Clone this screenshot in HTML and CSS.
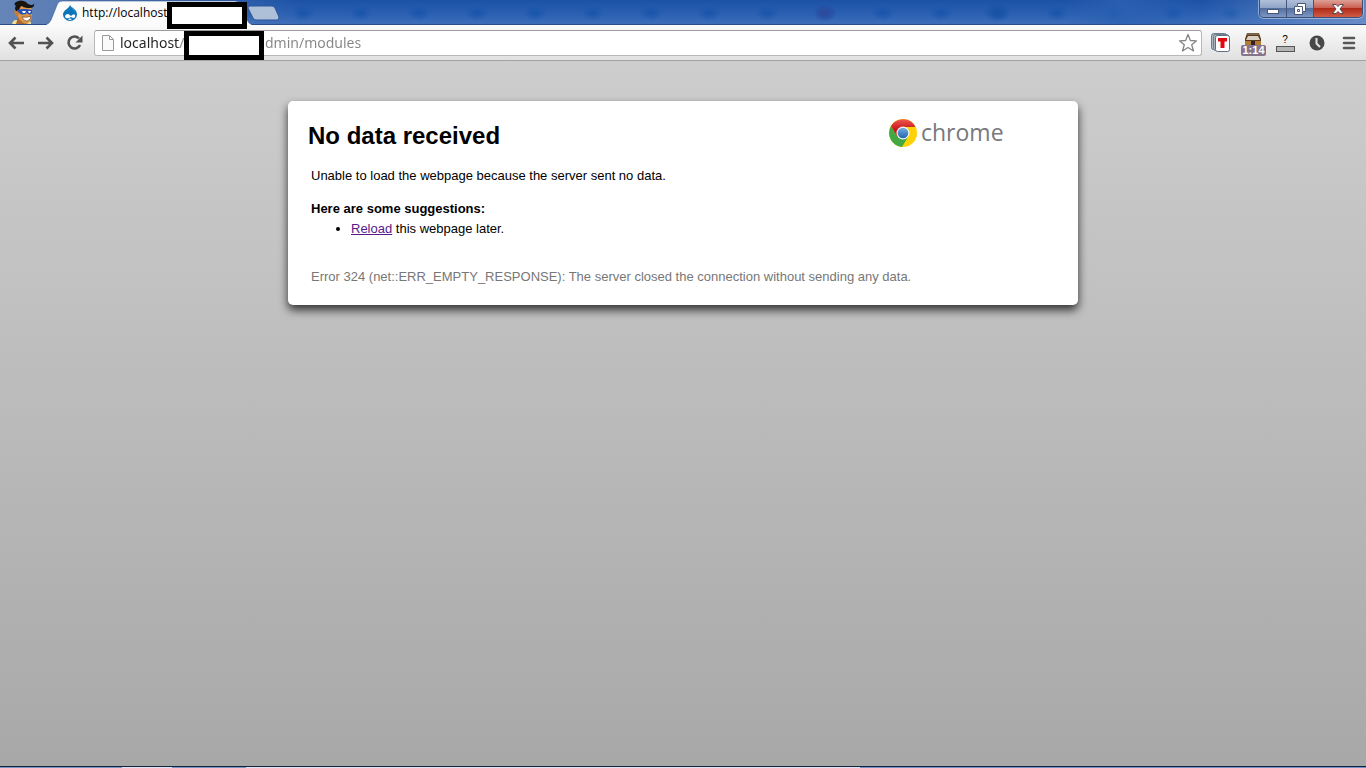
FILE: index.html
```html
<!DOCTYPE html>
<html lang="en">
<head>
    <meta charset="utf-8">
    <title>No data received</title>
    <link rel="stylesheet" href="styles.css">
</head>
<body>
<header class="titlebar">
    <svg class="avatar" width="24" height="24" viewBox="0 0 24 24">
        <path d="M0 24 Q1 20 4 20 L18 21 Q19 22 19 24 Z" fill="#f1df9a"/>
        <path d="M4 24 L6 17 L17 20 L15 24 Z" fill="#a9672f"/>
        <path d="M5 6 Q11 3 19 6 L20 15 Q20 21 15 24 Q9 23 6 17 Z" fill="#d99549"/>
        <path d="M4 10 Q1 10 3 15 L6 17 L7 10 Z" fill="#c47b35"/>
        <path d="M4 11 Q2 8 4 6 Q1 4 4 2 Q9 -1 14 2 Q16 5 19 5 Q22 5 22 3 Q23 8 18 8 Q12 8 10 6 Q8 6 7 11 Z" fill="#19140f"/>
        <path d="M5 10 Q12 8 20 10 L20 13 Q18 16 15 13 Q11 16 7 13 Z" fill="#2450b8"/>
        <path d="M10 11 L14 11 L13 13 L11 13 Z M16 11 L19 11 L18 13 L17 13 Z" fill="#fff"/>
        <path d="M10 17 Q15 18 19 16 Q18 21 14 21 Q11 20 10 17 Z" fill="#fff" stroke="#7a421c" stroke-width=".7"/>
    </svg>
    <button class="tab" type="button">
        <svg class="tab-shape" width="206" height="25" viewBox="0 0 206 25">
            <path d="M0 25 Q3 24 5 20 L11 5 Q12 1 16 1 L189 1 Q193 1 195 5 L201 20 Q203 24 206 25 Z" fill="#fbfbfb"/>
            <path d="M0 24.5 Q3 24 5 20 L11 5 Q12 1 16 1 L189 1 Q193 1 195 5 L201 20 Q203 24 206 24.5" fill="none" stroke="#35568f" stroke-opacity=".6"/>
        </svg>
        <svg class="favicon" width="16" height="16" viewBox="0 0 16 16">
            <path d="M8 0 C9 3 15 4 15 9.500 A7 6.500 0 0 1 1 9.500 C1 5 7 4 8 0 Z" fill="#0b76b8"/>
            <path d="M9 2 Q13 4 13 7 Q11 4 9 2 Z" fill="#3f9bd0"/>
            <path d="M3 12 Q3 9 6 9 Q8 10 9 11 Q12 8 13 10 Q14 13 11 13 L9 12 Q6 14 4 13 Z M6 14 Q8 13 10 14 Q8 16 6 14 Z" fill="#fff"/>
        </svg>
        <span class="tab-title">http://localhost/</span>
    </button>
    <button class="new-tab" type="button" aria-label="New tab">
        <svg width="34" height="16" viewBox="0 0 34 16">
            <path d="M3 1 L25 1 Q27 1 28 3 L32 12 Q32 15 30 15 L9 15 Q7 15 6 13 L1 3 Q1 1 3 1 Z" fill="#aebfd8" stroke="#2c559b"/>
        </svg>
    </button>
    <div class="window-buttons">
        <button class="win minimize" type="button" aria-label="Minimize">
            <svg width="14" height="14" viewBox="0 0 14 14"><rect x="1.500" y="7.500" width="11" height="4" fill="#fff" stroke="#4a5878"/></svg>
        </button>
        <button class="win restore" type="button" aria-label="Restore">
            <svg width="14" height="14" viewBox="0 0 14 14">
                <path d="M4.500 1.500 H12.500 V9.500 H9.500 V12.500 H1.500 V4.500 H4.500 Z" fill="#fff" stroke="#4a5878"/>
                <path d="M4.500 7.500 H6.500 V9.500 H4.500 Z M5 4.500 H9.500 V9" fill="none" stroke="#4a5878"/>
            </svg>
        </button>
        <button class="win close" type="button" aria-label="Close">
            <svg width="14" height="14" viewBox="0 0 14 14"><path d="M1.500 2.500 H5 L7 4.500 L9 2.500 H12.500 L9 7 L12.500 11.500 H9 L7 9.500 L5 11.500 H1.500 L5 7 Z" fill="#fff" stroke="#5b4550"/></svg>
        </button>
    </div>
    <span class="mask mask-tab"></span>
</header>

<nav class="toolbar">
    <button class="tool" type="button" aria-label="Back">
        <svg width="18" height="18" viewBox="0 0 18 18"><path d="M17 9 H4 M8.500 3.500 L3 9 L8.500 14.500" fill="none" stroke="#525252" stroke-width="2.600"/></svg>
    </button>
    <button class="tool" type="button" aria-label="Forward">
        <svg width="18" height="18" viewBox="0 0 18 18"><path d="M2 9 H15 M10.500 3.500 L16 9 L10.500 14.500" fill="none" stroke="#525252" stroke-width="2.600"/></svg>
    </button>
    <button class="tool" type="button" aria-label="Reload">
        <svg width="18" height="18" viewBox="0 0 18 18">
            <path d="M14 4.500 A6 6 0 1 0 15 11" fill="none" stroke="#525252" stroke-width="2.600"/>
            <path d="M17.500 1.500 V8.500 H10.500 Z" fill="#525252"/>
        </svg>
    </button>
    <div class="omnibox">
        <svg class="page-icon" width="14" height="18" viewBox="0 0 14 18"><path d="M1.500 1.500 H8.500 L12.500 5.500 V16.500 H1.500 Z M8.500 1.500 V5.500 H12.500" fill="#fafafa" stroke="#9a9a9a"/></svg>
        <input class="address" type="text" aria-label="Address" value="localhost/                    admin/modules">
        <button class="star" type="button" aria-label="Bookmark this page">
            <svg width="20" height="20" viewBox="0 0 20 20"><path d="M10 1.500 L12.400 7.500 L18.500 7.800 L13.700 11.800 L15.500 18 L10 14.500 L4.500 18 L6.300 11.800 L1.500 7.800 L7.600 7.500 Z" fill="#fff" stroke="#858585" stroke-width="1.300" stroke-linejoin="round"/></svg>
        </button>
    </div>
    <div class="extensions">
        <button class="ext" type="button" aria-label="T">
            <svg width="20" height="20" viewBox="0 0 20 20">
                <rect x=".5" y=".5" width="15" height="16" rx="2" fill="#a9b5bf" stroke="#6d7e8c"/>
                <rect x="2.500" y="1.500" width="15" height="16" rx="2" fill="#a9b5bf" stroke="#6d7e8c"/>
                <rect x="4.500" y="2.500" width="14" height="16" rx="2" fill="#fff" stroke="#5e7182"/>
                <path d="M7 5 H16 V8.500 H13.500 V15 H9.500 V8.500 H7 Z" fill="#e0090f"/>
            </svg>
        </button>
        <button class="ext timer" type="button">
            <svg width="20" height="20" viewBox="0 0 20 20">
                <path d="M4 0 H16 L18 6 V17 H2 V6 Z" fill="#5a3b20"/>
                <path d="M5 3 H15 L17 7 H3 Z" fill="#d8d0c4"/>
                <path d="M4 0 H16 V2 H4 Z" fill="#7c644c"/>
                <path d="M2 8 H18 V12 H2 Z" fill="#b07a33"/>
                <path d="M8 8 H12 V12 H8 Z" fill="#33251b"/>
            </svg>
            <span class="badge">1:14</span>
        </button>
        <button class="ext unknown" type="button">
            <span>?</span>
            <i class="slot"></i>
        </button>
        <button class="ext" type="button" aria-label="History">
            <svg width="16" height="16" viewBox="0 0 16 16"><circle cx="8" cy="8" r="7.500" fill="#484848"/><path d="M7.500 3 V8.500 L11 12" fill="none" stroke="#e5e5e5" stroke-width="2"/></svg>
        </button>
        <button class="ext" type="button" aria-label="Menu">
            <svg width="14" height="14" viewBox="0 0 14 14"><path d="M2 2 H12 M2 7 H12 M2 12 H12" stroke="#585858" stroke-width="2.600" stroke-linecap="round"/></svg>
        </button>
    </div>
    <span class="mask mask-address"></span>
</nav>

<main class="page">
    <section class="box">
        <div class="box-head">
            <h1>No data received</h1>
            <div class="logo">
                <svg width="28" height="28" viewBox="0 0 28 28">
                    <defs>
                        <linearGradient id="red" x2="0" y2="1"><stop offset="0" stop-color="#ee5a50"/><stop offset=".6" stop-color="#c9151b"/></linearGradient>
                        <linearGradient id="blue" x2="0" y2="1"><stop offset="0" stop-color="#75aee0"/><stop offset="1" stop-color="#1f64b0"/></linearGradient>
                    </defs>
                    <circle cx="14" cy="14" r="14" fill="#fdd308"/>
                    <path d="M14 14 L8 17 L2 7 A14 14 0 0 0 13 28 L19 18 Z" fill="#43a843"/>
                    <path d="M14 14 L8 17 L2 7 A14 14 0 0 1 26.500 8 L14 8 Z" fill="url(#red)"/>
                    <circle cx="14" cy="14" r="6.500" fill="#f4f6f8"/>
                    <circle cx="14" cy="14" r="5.300" fill="url(#blue)"/>
                </svg>
                <span>chrome</span>
            </div>
        </div>
        <div class="details">
            <p>Unable to load the webpage because the server sent no data.</p>
            <h2>Here are some suggestions:</h2>
            <ul>
                <li><a href="#">Reload</a> this webpage later.</li>
            </ul>
            <p class="error">Error 324 (net::ERR_EMPTY_RESPONSE): The server closed the connection without sending any data.</p>
        </div>
    </section>
</main>
<footer class="taskbar"></footer>
</body>
</html>
```
FILE: styles.css
```css
* {
    box-sizing: border-box;
}
body {
    margin: 0;
    min-height: 100vh;
    display: flex;
    flex-direction: column;
    font-family: "Liberation Sans", Arial, sans-serif;
    font-size: 13px;
    color: #000;
}
button {
    margin: 0;
    padding: 0;
    border: 0;
    background: none;
    font: inherit;
    color: #000;
    display: flex;
    align-items: center;
    justify-content: center;
}
svg {
    display: block;
    flex: none;
}

/* title bar */
.titlebar {
    position: relative;
    height: 25px;
    display: flex;
    align-items: flex-start;
    padding-left: 12px;
    border-bottom: 1px solid #2b4c86;
    background:
        radial-gradient(ellipse 12px 9px at 825px 13px, #30489a, transparent),
        radial-gradient(ellipse 14px 10px at 997px 12px, #1752a4, transparent),
        linear-gradient(90deg, #6685b7 0, #5c7eb6 50px, rgba(45, 95, 175, 0) 300px),
        linear-gradient(90deg, transparent 78%, rgba(43, 96, 178, .8) 82%, transparent 88%, rgba(125, 155, 205, .7)),
        radial-gradient(ellipse 11px 8px at 29px 13px, rgba(15, 80, 168, .7), transparent) 42px 0 / 58px 100%,
        linear-gradient(#1c52a6, #2b60b2 60%, #3d6db8);
}
.tab {
    position: relative;
    z-index: 1;
    width: 206px;
    height: 25px;
    margin-left: 10px;
    padding-left: 16px;
    justify-content: flex-start;
    gap: 4px;
    font: 12px/16px "Open Sans", "Noto Sans", sans-serif;
}
.tab-shape {
    position: absolute;
    left: 0;
    top: 0;
}
.favicon,
.tab-title {
    position: relative;
}
.new-tab {
    margin-top: 5px;
    margin-left: -5px;
}
.window-buttons {
    display: flex;
    margin-left: auto;
    margin-right: 3px;
    height: 18px;
    border: 1px solid #3d4f74;
    border-top: 0;
    border-radius: 0 0 5px 5px;
    overflow: hidden;
    box-shadow: 0 0 0 1px rgba(220, 230, 245, .5);
}
.win {
    width: 27px;
    background: linear-gradient(#b0bfd8, #8fa4c8 45%, #536f9f 50%, #7d98c4);
    border-right: 1px solid #43557b;
}
.win.close {
    width: 48px;
    border-right: 0;
    background: linear-gradient(#dfa096, #ca6153 45%, #b02a18 50%, #cf5d45);
}

/* toolbar */
.toolbar {
    position: relative;
    height: 36px;
    display: flex;
    align-items: center;
    padding: 0 8px 0 7px;
    border-bottom: 1px solid #a3a3a3;
    background: linear-gradient(#fbfbfb, #e0e0e0);
}
.tool {
    width: 18px;
    height: 18px;
    margin-right: 11px;
}
.omnibox {
    flex: 1;
    height: 26px;
    display: flex;
    align-items: center;
    padding: 0 3px 0 6px;
    border: 1px solid #b8b8b8;
    border-top-color: #9c9c9c;
    border-radius: 3px;
    background: #fff;
}
.address {
    flex: 1;
    min-width: 0;
    height: 22px;
    margin-left: 5px;
    padding: 0;
    border: 0;
    outline: 0;
    font: 14px/20px "Noto Sans", "Open Sans", sans-serif;
    color: transparent;
    /* host in black, path in grey */
    background: linear-gradient(90deg, #222 60px, #858585 60px);
    -webkit-background-clip: text;
    background-clip: text;
}
.extensions {
    display: flex;
    align-items: center;
    gap: 8px;
    margin-left: 7px;
    margin-right: -3px;
}
.ext {
    position: relative;
    width: 24px;
    height: 26px;
}
.badge {
    position: absolute;
    left: 0;
    bottom: 0;
    width: 25px;
    border-radius: 2px;
    background: #85748a;
    color: #fff;
    font-size: 11px;
    font-weight: bold;
    line-height: 11px;
    text-align: center;
}
.unknown {
    flex-direction: column;
    font-size: 10px;
    line-height: 12px;
}
.slot {
    width: 19px;
    height: 6px;
    border: 1px solid #555;
    background: #b5b5b5;
}

/* blanked-out names */
.mask {
    position: absolute;
    z-index: 2;
    width: 80px;
    border: 5px solid #000;
    background: #fff;
}
.mask-tab {
    left: 167px;
    top: 2px;
    height: 27px;
}
.mask-address {
    left: 184px;
    top: 6px;
    height: 29px;
}

/* error page */
.page {
    flex: 1;
    padding: 40px 20px;
    background: linear-gradient(#cdcdcd, #a8a8a8);
}
.box {
    max-width: 790px;
    margin: 0 auto;
    padding: 16px 20px 18px;
    border-radius: 5px;
    background: #fff;
    box-shadow: 0 5px 10px rgba(0, 0, 0, .75);
}
.box-head {
    display: flex;
    justify-content: space-between;
    height: 49px;
}
h1 {
    margin: 4px 0 0;
    font-size: 24px;
    line-height: 30px;
}
.logo {
    display: flex;
    align-items: center;
    gap: 4px;
    width: 169px;
    height: 32px;
    font: 23px/28px "Open Sans", "Noto Sans", sans-serif;
    color: #77787b;
}
.logo span {
    padding-bottom: 3px;
}
.details {
    padding: 0 3px;
    line-height: 20px;
}
.details p {
    margin: 0;
}
.details h2 {
    margin: 13px 0 0;
    font-size: 13px;
    line-height: 20px;
}
.details ul {
    margin: 0 0 28px;
    padding-left: 40px;
}
.details a {
    color: #551a8b;
}
.details .error {
    color: #777;
}

.taskbar {
    height: 2px;
    border-top: 1px solid #14223c;
    background:
        linear-gradient(90deg, #7795c4 122px, #dce6f2 122px 172px, #7795c4 172px 246px, #dce6f2 246px 860px, #6e92c8 860px);
}
```
